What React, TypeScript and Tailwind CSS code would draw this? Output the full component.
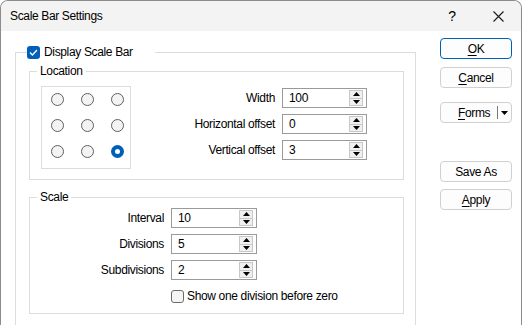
import React from "react";

const FONT = { fontFamily: "'Liberation Sans', Arial, sans-serif" };

function Spin({ value, w }: { value: string; w: string }) {
  return (
    <div className={`flex h-[20px] ${w} border border-[#9a9a9a] bg-white`}>
      <div className="flex-1 pl-[6px] leading-[18px] text-[12px]">{value}</div>
      <div className="flex flex-col w-[14px] mt-[1px] mr-[3px] mb-[1px]">
        <div className="flex-1 flex items-center justify-center bg-[#f0f0f0] border border-[#c8c8c8]">
          <svg width="7" height="4" viewBox="0 0 7 4"><path d="M0 4 L3.5 0 L7 4 Z" fill="#000" /></svg>
        </div>
        <div className="flex-1 flex items-center justify-center bg-[#f0f0f0] border border-t-0 border-[#c8c8c8]">
          <svg width="7" height="4" viewBox="0 0 7 4"><path d="M0 0 L7 0 L3.5 4 Z" fill="#000" /></svg>
        </div>
      </div>
    </div>
  );
}

function Radio({ on }: { on?: boolean }) {
  if (on)
    return (
      <div className="w-[13px] h-[13px] rounded-full bg-[#005fb8] flex items-center justify-center">
        <div className="w-[5px] h-[5px] rounded-full bg-white" />
      </div>
    );
  return <div className="w-[13px] h-[13px] rounded-full border border-[#5f5f5f] bg-[#f3f3f3]" />;
}

function Btn({ children, cls = "" }: { children: React.ReactNode; cls?: string }) {
  return (
    <div
      className={`h-[21px] w-[72px] rounded-[4px] border bg-[#fdfdfd] flex items-center justify-center text-[12px] ${cls}`}
    >
      {children}
    </div>
  );
}

export default function App() {
  return (
    <div
      style={FONT}
      className="w-[522px] h-[325px] overflow-hidden bg-white border-l border-r border-t border-[#8c8c8c] rounded-tl-[8px] rounded-tr-[8px] text-[12px] tracking-[-0.35px] text-black flex flex-col"
    >
      {/* title bar */}
      <div className="h-[30px] bg-[#f3f3f3] flex items-center shrink-0">
        <div className="pl-[9px] text-[12px] flex-1">Scale Bar Settings</div>
        <div className="w-[12px] text-[14px] mr-[35px] text-center">?</div>
        <div className="mr-[17px] flex items-center">
          <svg width="11" height="11" viewBox="0 0 11 11">
            <path d="M0.5 0.5 L10.5 10.5 M10.5 0.5 L0.5 10.5" stroke="#1a1a1a" strokeWidth="1.1" />
          </svg>
        </div>
      </div>

      {/* body */}
      <div className="flex flex-1">
        <div className="pl-[14px] pt-[13px]">
          <fieldset className="w-[401px] border border-[#dcdcdc] pl-[13px] pr-[11px] pb-[30px]">
            <legend className="ml-[-2px] w-[128px] h-[16px] flex items-center">
              <div className="w-[13px] h-[13px] rounded-[3px] bg-[#005fb8] flex items-center justify-center">
                <svg width="9" height="7" viewBox="0 0 9 7">
                  <path d="M1 3.5 L3.4 6 L8 1" stroke="#fff" strokeWidth="1.3" fill="none" />
                </svg>
              </div>
              <span className="ml-[4px] leading-[16px]">Display Scale Bar</span>
            </legend>

            {/* Location */}
            <fieldset className="mt-[3px] border border-[#dcdcdc] pl-[11px] pr-[36px] pt-[7px] pb-[10px]">
              <legend className="ml-[-4px] px-[3px] leading-[16px]">Location</legend>
              <div className="flex">
                <div className="w-[90px] h-[83px] border border-[#dcdcdc] pl-[9px] pt-[6px] grid grid-cols-[13px_13px_13px] gap-x-[17px] gap-y-[13px] content-start">
                  <Radio />
                  <Radio />
                  <Radio />
                  <Radio />
                  <Radio />
                  <Radio />
                  <Radio />
                  <Radio />
                  <Radio on />
                </div>
                <div className="ml-auto mt-[2px] flex flex-col gap-[6px]">
                  <div className="flex items-center justify-end gap-[7px]">
                    <span>Width</span>
                    <Spin value="100" w="w-[85px]" />
                  </div>
                  <div className="flex items-center justify-end gap-[7px]">
                    <span>Horizontal offset</span>
                    <Spin value="0" w="w-[85px]" />
                  </div>
                  <div className="flex items-center justify-end gap-[7px]">
                    <span>Vertical offset</span>
                    <Spin value="3" w="w-[85px]" />
                  </div>
                </div>
              </div>
            </fieldset>

            {/* Scale */}
            <fieldset className="mt-[9px] border border-[#dcdcdc] pt-[3px] pb-[9px]">
              <legend className="ml-[7px] px-[3px] leading-[16px]">Scale</legend>
              <div className="flex flex-col gap-[6px]">
                <div className="flex items-center">
                  <div className="w-[141px] pr-[7px] text-right">Interval</div>
                  <Spin value="10" w="w-[86px]" />
                </div>
                <div className="flex items-center">
                  <div className="w-[141px] pr-[7px] text-right">Divisions</div>
                  <Spin value="5" w="w-[86px]" />
                </div>
                <div className="flex items-center">
                  <div className="w-[141px] pr-[7px] text-right">Subdivisions</div>
                  <Spin value="2" w="w-[86px]" />
                </div>
                <div className="flex items-center ml-[141px] mt-[2px]">
                  <div className="w-[13px] h-[13px] rounded-[3px] border border-[#6a6a6a] bg-[#f5f5f5]" />
                  <span className="ml-[3px] leading-[16px]">Show one division before zero</span>
                </div>
              </div>
            </fieldset>
          </fieldset>
        </div>

        {/* buttons */}
        <div className="ml-[24px] pt-[7px] flex flex-col">
          <Btn cls="border-[#005fb8]">
            <span>
              <span className="underline underline-offset-2">O</span>K
            </span>
          </Btn>
          <Btn cls="mt-[8px] border-[#d0d0d0]">
            <span>
              <span className="underline underline-offset-2">C</span>ancel
            </span>
          </Btn>
          <div className="mt-[14px] h-[21px] w-[72px] rounded-[4px] border border-[#d0d0d0] bg-[#fdfdfd] flex items-center">
            <div className="w-[56px] pl-[17px] whitespace-nowrap">
              <span className="underline underline-offset-2">F</span>orms
            </div>
            <div className="w-px h-[13px] bg-[#7a7a7a]" />
            <div className="flex-1 flex items-center justify-center">
              <svg width="7" height="4" viewBox="0 0 7 4"><path d="M0 0 L7 0 L3.5 4 Z" fill="#000" /></svg>
            </div>
          </div>
          <Btn cls="mt-[38px] border-[#d0d0d0]">Save As</Btn>
          <Btn cls="mt-[7px] border-[#d0d0d0]">
            <span>
              <span className="underline underline-offset-2">A</span>pply
            </span>
          </Btn>
        </div>
      </div>
    </div>
  );
}
